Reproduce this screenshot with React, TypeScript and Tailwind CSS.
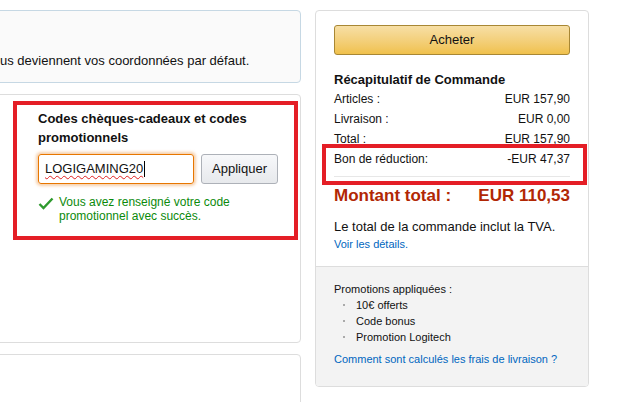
import React from "react";

const font = { fontFamily: '"Liberation Sans", Arial, sans-serif' };

function SummaryRow({ label, value }: { label: string; value: string }) {
  return (
    <div className="flex justify-between text-[12px] leading-[20px] text-[#111]">
      <span>{label}</span>
      <span>{value}</span>
    </div>
  );
}

export default function App() {
  return (
    <div className="h-[402px] w-[640px] overflow-hidden bg-white" style={font}>
      <div className="flex gap-[14px] pt-[10px]">
        {/* colonne gauche */}
        <div className="-ml-[20px] flex w-[321px] shrink-0 flex-col gap-[11px]">
          <div className="h-[73px] rounded-[4px] border border-[#c6d8e4] bg-[#fafafa] pl-[19px] pt-[42px]">
            <p className="whitespace-nowrap text-[13px] leading-[16px] text-[#111]">
              us deviennent vos coordonnées par défaut.
            </p>
          </div>

          <div className="relative h-[249px] rounded-[4px] border border-[#dddddd] bg-white pl-[57px] pt-[14px]">
            <h3 className="w-[230px] text-[13px] font-bold leading-[19px] text-[#111]">
              Codes chèques-cadeaux et codes promotionnels
            </h3>
            <div className="mt-[7px] flex gap-[7px]">
              <div className="flex h-[30px] w-[156px] items-center rounded-[3px] border border-[#e77600] px-[6px] shadow-[0_0_3px_2px_rgba(228,121,17,0.35)]">
                <span className="text-[13px] text-[#111] underline decoration-[#e02020] decoration-wavy decoration-1 underline-offset-2">
                  LOGIGAMING20
                </span>
                <span className="ml-px h-[16px] w-px bg-black" />
              </div>
              <div className="flex h-[30px] w-[77px] items-center justify-center rounded-[3px] border border-[#adb1b8] bg-gradient-to-b from-[#f7f8fa] to-[#e7e9ec] text-[13px] text-[#111]">
                Appliquer
              </div>
            </div>
            <div className="mt-[11px] flex gap-[5px]">
              <svg width="16" height="13" viewBox="0 0 16 13" className="mt-[2px] shrink-0">
                <polyline points="1.5,7 5.5,11 14.5,1.5" fill="none" stroke="#2e9a2e" strokeWidth="2.4" />
              </svg>
              <p className="w-[185px] text-[12px] leading-[14px] text-[#0b8a0b]">
                Vous avez renseigné votre code promotionnel avec succès.
              </p>
            </div>
            <div className="absolute left-[32px] top-[6px] h-[139px] w-[285px] border-4 border-[#e41e26]" />
          </div>

          <div className="h-[80px] rounded-[4px] border border-[#dddddd] bg-white" />
        </div>

        {/* colonne droite */}
        <div className="relative flex h-[377px] w-[274px] shrink-0 flex-col overflow-hidden rounded-[4px] border border-[#dddddd] bg-white">
          <div className="px-[18px] pt-[14px]">
            <div className="flex h-[30px] items-center justify-center rounded-[3px] border border-[#a88734] bg-gradient-to-b from-[#f7dfa5] to-[#f0c14b] text-[13px] text-[#111]">
              Acheter
            </div>
            <h4 className="mt-[15px] text-[13px] font-bold leading-[19px] text-[#111]">
              Récapitulatif de Commande
            </h4>
            <SummaryRow label="Articles :" value="EUR 157,90" />
            <SummaryRow label="Livraison :" value="EUR 0,00" />
            <SummaryRow label="Total :" value="EUR 157,90" />
            <SummaryRow label="Bon de réduction:" value="-EUR 47,37" />
            <div className="mt-[7px] h-px bg-[#e7e7e7]" />
            <div className="mt-[9px] flex justify-between text-[17px] font-bold leading-[20px] text-[#b12704]">
              <span>Montant total :</span>
              <span>EUR 110,53</span>
            </div>
            <p className="mt-[12px] whitespace-nowrap text-[13px] leading-[18px] text-[#111]">
              Le total de la commande inclut la TVA.
            </p>
            <p className="text-[11px] leading-[16px] text-[#0066c0]">Voir les détails.</p>
          </div>
          <div className="mt-[14px] flex-1 border-t border-[#dddddd] bg-[#f3f3f3] px-[18px] pt-[14px]">
            <p className="text-[11px] leading-[16px] text-[#111]">Promotions appliquées :</p>
            <ul className="text-[11px] leading-[16px] text-[#111]">
              {["10€ offerts", "Code bonus", "Promotion Logitech"].map((p) => (
                <li key={p} className="flex items-center">
                  <span className="ml-[9px] mr-[11px] h-[2px] w-[2px] bg-[#aaaaaa]" />
                  {p}
                </li>
              ))}
            </ul>
            <p className="mt-[6px] whitespace-nowrap text-[11px] leading-[16px] text-[#0066c0]">
              Comment sont calculés les frais de livraison ?
            </p>
          </div>
          <div className="absolute left-[6px] top-[133px] h-[41px] w-[265px] border-4 border-[#e41e26]" />
        </div>
      </div>
    </div>
  );
}
